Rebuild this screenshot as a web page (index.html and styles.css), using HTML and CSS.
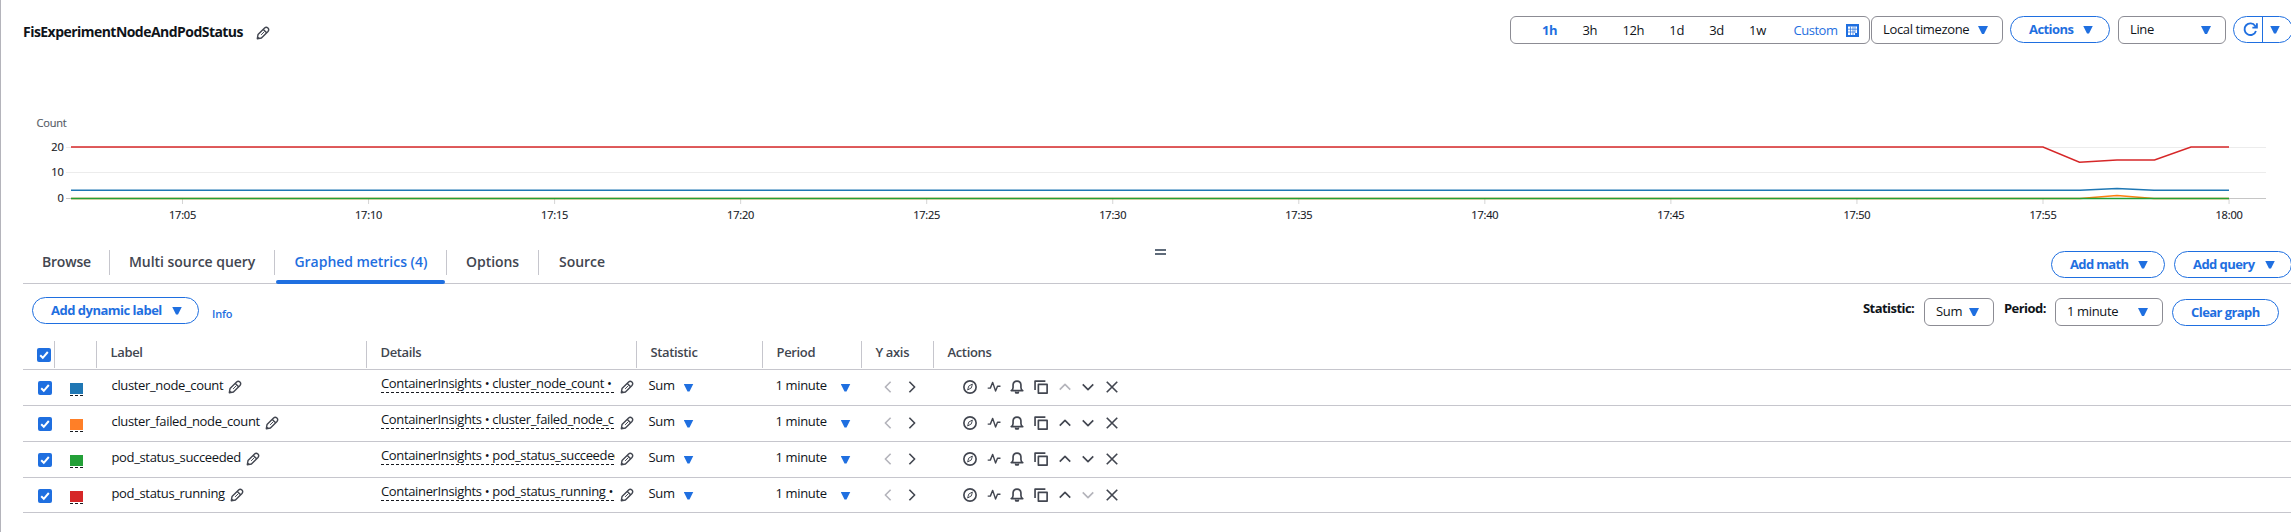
FILE: index.html
```html
<!DOCTYPE html>
<html lang="en">
<head>
<meta charset="utf-8">
<title>FisExperimentNodeAndPodStatus</title>
<link rel="stylesheet" href="styles.css">
</head>
<body>
<svg class="defs" aria-hidden="true">
  <symbol id="pencil" viewBox="0 0 16 16"><path class="mid" d="M1.500 14.500 2.300 9.800 9.800 2.300Q11.700.6 13.600 2.400 15.400 4.300 13.700 6.200L6.200 13.700ZM8.700 4.200 11.800 7.300M1.500 14.500 3.200 12.800" /><path class="thin" d="M5.800 10.200 9.500 6.500"/></symbol>
  <symbol id="compass" viewBox="0 0 16 16"><circle cx="8" cy="8" r="7"/><path class="thin" d="M10.700 4.600 9.600 9 5.300 11.400 6.500 7ZM8 8v.2"/></symbol>
  <symbol id="pulse" viewBox="0 0 16 16"><path class="mid" d="M.8 9.300H3.800L6.500 2.700 9.800 12.600 12 7.200H15.400"/></symbol>
  <symbol id="bell" viewBox="0 0 16 16"><path d="M1.400 12.200H14.600Q12.500 11 12.500 8.500V5.500Q12.200 1.300 8 1.200 3.800 1.300 3.500 5.500V8.500Q3.500 11 1.400 12.200ZM6.500 13.500V14.700H9.500V13.500"/></symbol>
  <symbol id="copy" viewBox="0 0 16 16"><path d="M5 5H15V15H5ZM1.200 11.500V1.200H13"/></symbol>
  <symbol id="up" viewBox="0 0 16 16"><path d="M2 11 8 5 14 11"/></symbol>
  <symbol id="down" viewBox="0 0 16 16"><path d="M2 5 8 11 14 5"/></symbol>
  <symbol id="left" viewBox="0 0 16 16"><path d="M11 2 5 8 11 14"/></symbol>
  <symbol id="right" viewBox="0 0 16 16"><path d="M5 2 11 8 5 14"/></symbol>
  <symbol id="close" viewBox="0 0 16 16"><path d="M2 2 14 14M14 2 2 14"/></symbol>
  <symbol id="check" viewBox="0 0 14 14"><path d="M3.200 7.200 5.800 9.800 10.800 4"/></symbol>
</svg>
<main class="page">
  <header class="header">
    <h1 class="title">FisExperimentNodeAndPodStatus</h1>
    <svg class="icon title-pencil"><use href="#pencil"/></svg>
    <div class="controls">
      <div class="range">
        <span class="active">1h</span><span>3h</span><span>12h</span><span>1d</span><span>3d</span><span>1w</span>
        <span class="custom">Custom
        <svg class="calendar" viewBox="0 0 13 13"><path class="cal-f" d="M0 0H13V13H0Z"/><path class="cal-w" d="M2 2.500H11V9H9V11H2Z"/><path class="cal-l" d="M4.500 2.500V11M7 2.500V11M9 2.500V9M2 5.200H11M2 8H9"/></svg></span>
      </div>
      <div class="select tz"><span>Local timezone</span><i class="tri"></i></div>
      <div class="btn actions"><span>Actions</span><i class="tri"></i></div>
      <div class="select line"><span>Line</span><i class="tri"></i></div>
      <div class="btn refresh"><svg viewBox="0 0 16 16"><path d="M13.800 9.500A6.200 6.200 0 1 1 13 4.200L14.200 5.800M14.800 1.200V6H10"/></svg><b></b><i class="tri"></i></div>
    </div>
  </header>
  <svg class="chart" viewBox="1 60 2290 180">
    <path class="grid" d="M66 147.500H2266M66 172.500H2266"/>
    <path class="axis" d="M66 198.500H71M2229 198.500H2266"/>
    <g id="ticks"></g>
    <text class="unit" x="36.500" y="127">Count</text>
    <g class="ylab"><text x="63.500" y="151">20</text><text x="63.500" y="176">10</text><text x="63.500" y="202">0</text></g>
    <path class="s orange" d="M71 198.500H2080L2117 195.500 2154 198.500H2229"/>
    <path class="s blue" d="M71 190.300H2080L2117 188.400 2154 190.300H2229"/>
    <path class="s green" d="M71 198.500H2229"/>
    <path class="s red" d="M71 147H2043L2079.500 162.300 2117 160H2154.500L2191 147H2229"/>
  </svg>
  <nav class="tabs">
    <div class="tablist">
      <span class="tab t1">Browse</span><span class="tab t2">Multi source query</span><span class="tab t3 on">Graphed metrics (4)</span><span class="tab t4">Options</span><span class="tab t5">Source</span>
    </div>
    <div class="handle"></div>
    <div class="tab-buttons">
      <div class="btn math"><span>Add math</span><i class="tri"></i></div>
      <div class="btn query"><span>Add query</span><i class="tri"></i></div>
    </div>
  </nav>
  <section class="toolbar">
    <div class="btn dyn"><span>Add dynamic label</span><i class="tri"></i></div>
    <span class="info">Info</span>
    <div class="filters">
      <span class="flabel l1">Statistic:</span>
      <div class="select stat"><span>Sum</span><i class="tri"></i></div>
      <span class="flabel l2">Period:</span>
      <div class="select period"><span>1 minute</span><i class="tri"></i></div>
      <div class="btn clear"><span>Clear graph</span></div>
    </div>
  </section>
  <section class="table" id="table">
    <div class="thead">
      <span class="c0"><svg class="checkbox"><use href="#check"/></svg></span><span></span><span>Label</span><span>Details</span><span>Statistic</span><span>Period</span><span>Y axis</span><span>Actions</span>
    </div>
  </section>
</main>
<script src="app.js"></script>
</body>
</html>
```
FILE: styles.css
```css
* { box-sizing: border-box; }
body { margin: 0; height: 532px; font-family: "Open Sans", "Noto Sans", sans-serif; font-size: 13px; letter-spacing: -.35px; color: #0f141a; background: #fff; overflow: hidden; }
.defs { display: none; }
.page { width: 2291px; height: 532px; border-left: 1px solid #b4b4bb; overflow: hidden; }
.icon { width: 14px; height: 14px; fill: none; stroke: #424650; stroke-width: 1.900; stroke-linejoin: round; flex: none; }
.thin { stroke-width: 1.100; }
.mid { stroke-width: 1.600; }
.tri { width: 10px; height: 8px; background: #1f6fe0; clip-path: polygon(0 0, 100% 0, 60% 100%, 40% 100%); flex: none; }
.header { display: flex; height: 60px; padding: 16px 0 0 22px; }
.title { margin: 0; width: 233px; font-size: 14px; line-height: 31px; font-weight: 700; white-space: nowrap; letter-spacing: -.54px; }
.title-pencil { margin-top: 10px; }
.controls { display: flex; margin-left: auto; margin-right: -2px; height: 28px; }
.range, .select { display: flex; align-items: center; height: 28px; border: 1px solid #8c8c94; border-radius: 6px; white-space: nowrap; }
.range { width: 360px; margin-right: 1px; padding-left: 31px; gap: 25.200px; }
.active { color: #1f6fe0; font-weight: 700; }
.custom { display: flex; align-items: center; gap: 9px; margin-left: 2.500px; color: #1f6fe0; letter-spacing: -.5px; }
.calendar { width: 13px; height: 13px; }
.cal-f { fill: #1f6fe0; }
.cal-w { fill: #fff; }
.cal-l { stroke: #1f6fe0; stroke-width: .7; fill: none; }
.select { padding: 0 14px 2px 11px; justify-content: space-between; }
.select .tri { margin-top: 2px; }
.btn { display: flex; align-items: center; justify-content: space-between; height: 27px; border: 1.500px solid #1f6fe0; border-radius: 14px; color: #1f6fe0; font-weight: 700; letter-spacing: -.56px; white-space: nowrap; padding: 0 16px 2px 18px; }
.btn .tri { margin-top: 2px; }
.tz { width: 132px; margin-right: 7px; }
.actions { width: 100px; margin-right: 8px; }
.line { width: 108px; margin-right: 7px; }
.refresh { width: 60px; padding: 0 0 0 9px; justify-content: flex-start; }
.refresh svg { width: 15px; height: 15px; fill: none; stroke: #1f6fe0; stroke-width: 2; }
.refresh b { width: 1px; height: 25px; margin: 0 7px 0 4px; background: #1f6fe0; }
.refresh .tri { margin-top: 0; }
.chart { display: block; width: 2290px; height: 180px; }
.chart text { font-size: 11px; fill: #16191f; letter-spacing: -.2px; stroke: #16191f; stroke-width: .15px; }
.chart .unit { fill: #545b64; stroke: #545b64; }
.ylab { text-anchor: end; }
.xlab { text-anchor: middle; }
.grid { stroke: #ececec; }
.axis { stroke: #c6c6c6; }
.tick { stroke: #d5d5d5; }
.s { fill: none; stroke-width: 1.500; }
.red { stroke: #d62728; }
.blue { stroke: #1f77b4; }
.green { stroke: #23a038; }
.orange { stroke: #ff7f0e; }
.tabs { display: flex; height: 44px; margin-left: 22px; border-bottom: 1px solid #c6c6cd; }
.tablist { display: flex; width: 1132px; font-size: 14px; font-weight: 600; letter-spacing: -.04px; color: #424650; }
.tab { position: relative; height: 43px; padding: 10px 0 0 20px; line-height: 24px; white-space: nowrap; background: linear-gradient(#c6c6cd, #c6c6cd) right 10px / 1px 25px no-repeat; }
.t1 { width: 87px; padding-left: 19px; letter-spacing: -.2px; }
.t2 { width: 165px; padding-left: 19px; }
.t3 { width: 172px; padding-left: 19.500px; }
.t4 { width: 92px; padding-left: 19px; }
.t5 { width: 80px; background: none; }
.on { color: #1f6fe0; }
.on::after { content: ""; position: absolute; left: 1px; right: 2px; bottom: -1px; height: 4px; border-radius: 2px; background: #1f6fe0; }
.handle { width: 11px; height: 6px; margin-top: 9px; border: solid #5f6b7a; border-width: 2px 0; }
.tab-buttons { display: flex; gap: 9px; margin: 11px -1px 0 auto; }
.math { width: 114px; letter-spacing: -.65px; }
.query { width: 118px; }
.toolbar { display: flex; height: 57px; padding: 13px 12px 0 31px; }
.dyn { width: 167px; letter-spacing: -.5px; }
.info { margin: 8px 0 0 13px; font-size: 11px; font-weight: 600; line-height: 18px; color: #1f6fe0; letter-spacing: -.2px; }
.filters { display: flex; margin-left: auto; }
.flabel { font-weight: 700; line-height: 23px; white-space: nowrap; letter-spacing: -.55px; }
.l1 { width: 61px; }
.l2 { width: 51px; }
.stat { width: 70px; margin: 1px 10px 0 0; }
.period { width: 108px; margin: 1px 9px 0 0; }
.clear { width: 107px; margin-top: 2px; }
.table { margin-left: 22px; }
.thead, .row { display: grid; grid-template-columns: 32px 42px 270px 270px 126px 99px 72px 1fr; border-bottom: 1px solid #c6c6cd; }
.thead { height: 29px; color: #424650; font-weight: 600; line-height: 23px; }
.thead > span { padding-left: 13.500px; height: 27px; border-right: 1px solid #c6c6cd; }
.thead > span:last-child { border: 0; }
.thead > .c0 { padding: 7px 0 0 14px; }
.checkbox { display: block; width: 14px; height: 14px; border-radius: 2px; background: #1f6fe0; fill: none; stroke: #fff; stroke-width: 2; }
.row { height: 36px; line-height: 31px; }
.row:last-child { height: 35px; }
.row > div { display: flex; white-space: nowrap; }
.row .checkbox { margin: 11px 0 0 15px; }
.swatch { width: 13px; height: 11px; margin: 13px 0 0 15px; }
.row > .sw { flex-direction: column; }
.dash { width: 13px; height: 1px; margin: 1px 0 0 15px; background: repeating-linear-gradient(90deg, #16191f 0 3px, transparent 3px 5px); }
.label { padding-left: 14.500px; }
.row .icon { margin: 10px 0 0 5px; }
.details { padding-left: 14px; }
.dtext { width: 234px; height: 23px; overflow: hidden; line-height: 26px; background: repeating-linear-gradient(90deg, #16191f 0 3px, transparent 3px 5px) 0 22px / 100% 1px no-repeat; }
.row .statc { padding-left: 11.500px; }
.row .perc { padding-left: 12.500px; }
.row .tri { margin-top: 13.500px; }
.statc > span { width: 35px; }
.perc > span { width: 65px; }
.row .yax { padding-left: 18.500px; gap: 10px; }
.row .acts { padding-left: 29px; gap: 9.700px; }
.row .yax .icon, .row .acts .icon { margin-left: 0; }
.row .off { stroke: #b4b4bb; }
```
FILE: app.js
```js
const byId = id => document.getElementById(id);

let ticks = '';
for (let i = 0; i < 12; i++) {
  const x = 182.5 + i * 186.05, m = 5 * (i + 1);
  const label = m === 60 ? '18:00' : '17:' + String(m).padStart(2, '0');
  ticks += `<path class="tick" d="M${x} 199V204"/><text class="xlab" x="${x}" y="219">${label}</text>`;
}
byId('ticks').innerHTML = ticks;

const icon = (id, off) => `<svg class="icon${off ? ' off' : ''}"><use href="#${id}"/></svg>`;
const rows = [
  ['cluster_node_count', '#1f77b4', 'cluster_node_count •'],
  ['cluster_failed_node_count', '#ff7f27', 'cluster_failed_node_c'],
  ['pod_status_succeeded', '#23a038', 'pod_status_succeeded'],
  ['pod_status_running', '#d62728', 'pod_status_running •']
];
byId('table').insertAdjacentHTML('beforeend', rows.map(([name, color, detail], i) => `
  <div class="row">
    <div><svg class="checkbox"><use href="#check"/></svg></div>
    <div class="sw"><i class="swatch" style="background:${color}"></i><i class="dash"></i></div>
    <div class="label"><span>${name}</span>${icon('pencil')}</div>
    <div class="details"><span class="dtext">ContainerInsights • ${detail}</span>${icon('pencil')}</div>
    <div class="statc"><span>Sum</span><i class="tri"></i></div>
    <div class="perc"><span>1 minute</span><i class="tri"></i></div>
    <div class="yax">${icon('left', true)}${icon('right')}</div>
    <div class="acts">${icon('compass')}${icon('pulse')}${icon('bell')}${icon('copy')}${icon('up', i === 0)}${icon('down', i === 3)}${icon('close')}</div>
  </div>`).join(''));
```
